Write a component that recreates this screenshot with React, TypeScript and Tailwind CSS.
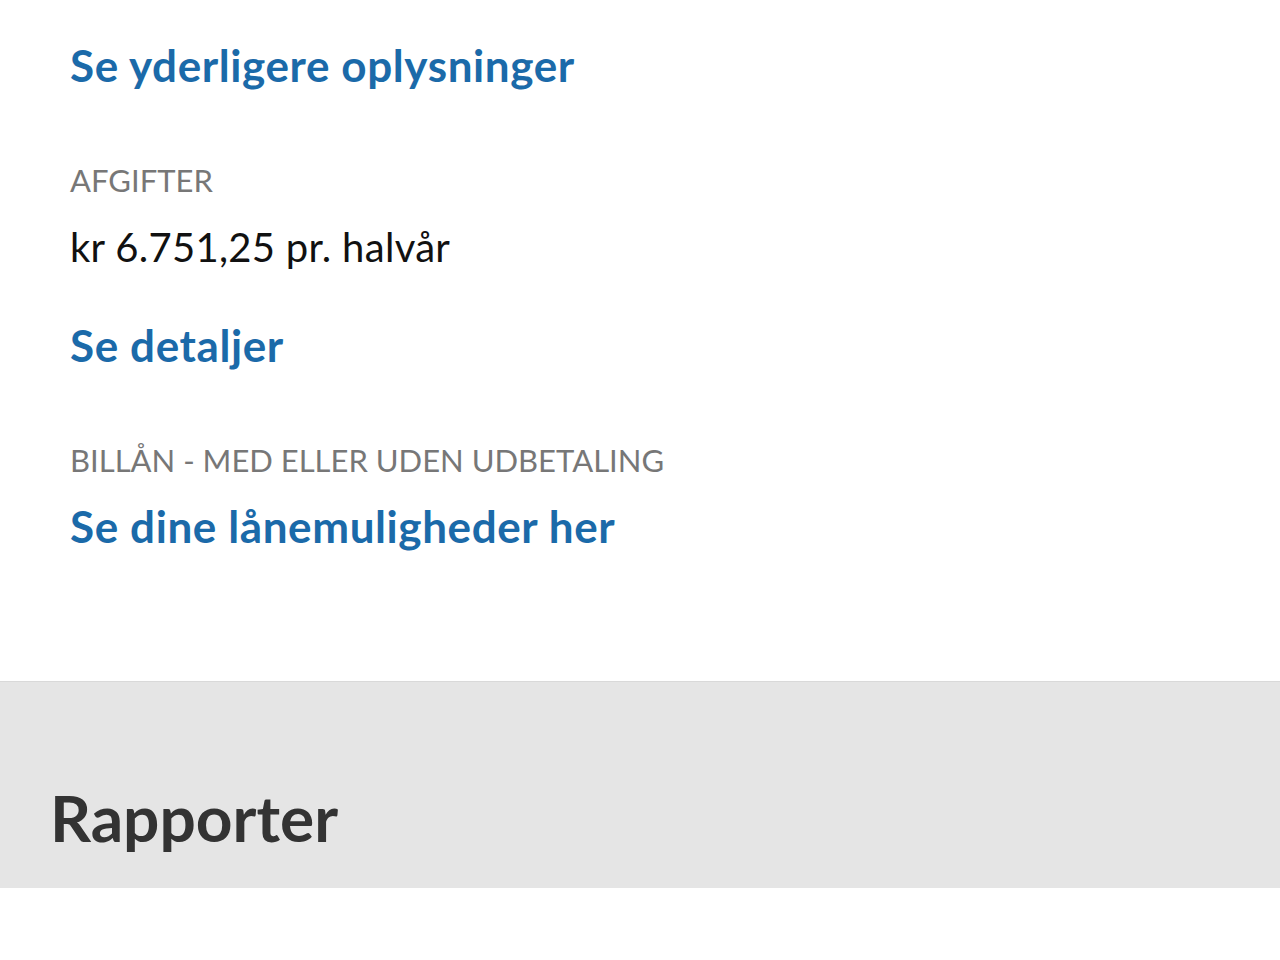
export default function App() {
  return (
    <div className="min-h-[960px] bg-white" style={{ fontFamily: "Lato, 'Noto Sans', sans-serif" }}>
      <div className="px-[70px] pt-[37px] h-[681px]">
        <a className="block text-[44px] leading-[56px] tracking-[0.6px] font-bold text-[#1b6aa9]">Se yderligere oplysninger</a>

        <div className="mt-[67px] text-[31px] leading-[40px] text-[#777] uppercase">Afgifter</div>
        <div className="mt-[23px] text-[40px] leading-[48px] tracking-[0.3px] text-[#111]">kr 6.751,25 pr. halvår</div>
        <a className="block mt-[46px] text-[44px] leading-[56px] tracking-[0.6px] font-bold text-[#1b6aa9]">Se detaljer</a>

        <div className="mt-[67px] text-[31px] leading-[40px] text-[#777] uppercase">Billån - med eller uden udbetaling</div>
        <a className="block mt-[18px] text-[44px] leading-[56px] tracking-[0.6px] font-bold text-[#1b6aa9]">Se dine lånemuligheder her</a>
      </div>

      <div className="h-[207px] bg-[#e5e5e5] border-t border-[#d9d9d9] px-[50px] pt-[100px]">
        <h2 className="text-[64px] leading-[72px] font-bold text-[#333]">Rapporter</h2>
      </div>
    </div>
  );
}
